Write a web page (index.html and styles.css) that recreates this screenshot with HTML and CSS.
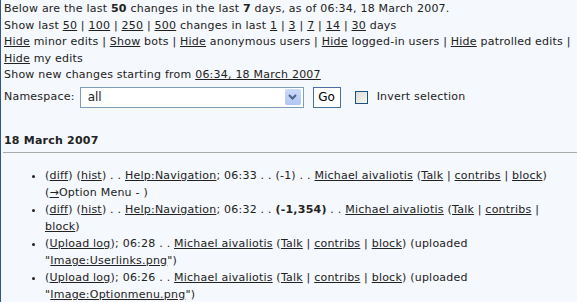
FILE: index.html
```html
<!doctype html>
<html lang="en">
<head>
	<meta charset="UTF-8">
	<title>Recent changes</title>
	<link rel="stylesheet" href="styles.css">
</head>
<body>
	<div id="content">
		<div class="summary">
			<p>Below are the last <b>50</b> changes in the last <b>7</b> days, as of 06:34, 18 March 2007.</p>
			<p>Show last <a href="#">50</a> | <a href="#">100</a> | <a href="#">250</a> | <a href="#">500</a> changes in last <a href="#">1</a> | <a href="#">3</a> | <a href="#">7</a> | <a href="#">14</a> | <a href="#">30</a> days</p>
			<p><a href="#">Hide</a> minor edits | <a href="#">Show</a> bots | <a href="#">Hide</a> anonymous users | <a href="#">Hide</a> logged-in users | <a href="#">Hide</a> patrolled edits | <a href="#">Hide</a> my edits</p>
			<p>Show new changes starting from <a href="#">06:34, 18 March 2007</a></p>
		</div>
		<form class="filter">
			<label>Namespace:</label>
			<div class="select">
				<span class="value">all</span>
				<span class="arrow">
					<svg width="9" height="6" viewBox="0 0 9 6"><path d="M1 1l3.5 3.5L8 1" fill="none" stroke="#4d6185" stroke-width="2"/></svg>
				</span>
			</div>
			<button type="button" class="go">Go</button>
			<span class="check"></span>
			<span class="invert">Invert selection</span>
		</form>
		<h4 class="day">18 March 2007</h4>
		<ul class="changes">
			<li>(<a href="#">diff</a>) (<a href="#">hist</a>) . . <a href="#">Help:Navigation</a>; 06:33 . . (-1) . . <a href="#" class="user">Michael aivaliotis</a> (<a href="#">Talk</a> | <a href="#">contribs</a> | <a href="#">block</a>) <span class="comment">(<a href="#">→</a>Option Menu - )</span></li>
			<li>(<a href="#">diff</a>) (<a href="#">hist</a>) . . <a href="#">Help:Navigation</a>; 06:32 . . <b>(-1,354)</b> . . <a href="#" class="user">Michael aivaliotis</a> (<a href="#">Talk</a> | <a href="#">contribs</a> | <a href="#">block</a>)</li>
			<li>(<a href="#">Upload log</a>); 06:28 . . <a href="#" class="user">Michael aivaliotis</a> (<a href="#">Talk</a> | <a href="#">contribs</a> | <a href="#">block</a>) (uploaded "<a href="#">Image:Userlinks.png</a>")</li>
			<li>(<a href="#">Upload log</a>); 06:26 . . <a href="#" class="user">Michael aivaliotis</a> (<a href="#">Talk</a> | <a href="#">contribs</a> | <a href="#">block</a>) (uploaded "<a href="#">Image:Optionmenu.png</a>")</li>
		</ul>
	</div>
</body>
</html>
```
FILE: styles.css
```css
html{
	background:#f5f8fc;
}
body{
	margin:0;
	min-height:302px;
	border-left:1px solid #34558b;
	background:#f5f8fc;
	color:#222;
	font:11px/16.5px "DejaVu Sans", Verdana, sans-serif;
	letter-spacing:0.22px;
}
#content{
	padding-left:2px;
}
a{
	color:#222;
	text-decoration:underline;
}
p{
	margin:0;
	padding-left:1px;
}
.summary{
	padding-top:1px;
}
.filter{
	display:flex;
	align-items:center;
	margin:3px 0 0 1px;
}
.filter label{
	margin-right:5px;
}
.select{
	box-sizing:border-box;
	width:224px;
	height:21px;
	border:1px solid #7f9db9;
	background:#fff;
	display:flex;
	align-items:center;
	justify-content:space-between;
	padding:0 2px 0 7px;
	font-size:12px;
	letter-spacing:0;
}
.arrow{
	width:16px;
	height:16px;
	border-radius:2px;
	background:linear-gradient(#cbdaf9,#b2c6f3);
	display:flex;
	align-items:center;
	justify-content:center;
}
.go{
	box-sizing:border-box;
	width:28px;
	height:21px;
	margin-left:9px;
	padding:0;
	border:1px solid #4b6ea3;
	background:#fff;
	color:#000;
	font:12px "DejaVu Sans", Verdana, sans-serif;
}
.check{
	box-sizing:border-box;
	width:13px;
	height:13px;
	margin-left:14px;
	border:1px solid #1c5180;
	background:linear-gradient(135deg,#dcdcd6,#f6f6f3);
}
.invert{
	margin-left:9px;
}
.day{
	margin:24px 0 0;
	padding:0 0 3px 1px;
	border-bottom:1px solid #aaa;
	font-size:11px;
	line-height:17px;
}
.changes{
	margin:14px 0 0;
	padding-left:42px;
	list-style:disc;
	line-height:17px;
}
.user{
	white-space:nowrap;
}
```
